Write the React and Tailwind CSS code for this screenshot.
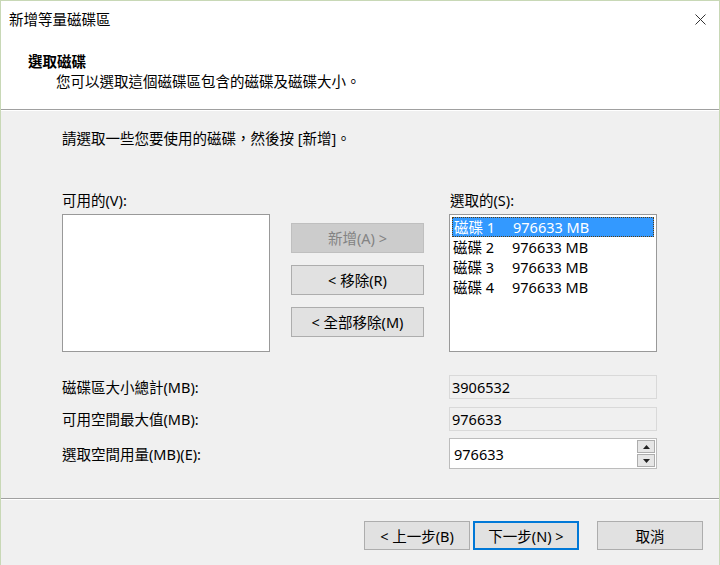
import React from "react";

// 新增等量磁碟區 精靈 — 選取磁碟 頁面

const FONT = {
  fontFamily: '"Noto Sans", "Noto Sans CJK TC", sans-serif',
};

const disks = [
  { name: "磁碟 1", size: "976633 MB", selected: true },
  { name: "磁碟 2", size: "976633 MB" },
  { name: "磁碟 3", size: "976633 MB" },
  { name: "磁碟 4", size: "976633 MB" },
];

function Btn({ children, disabled, primary, className = "" }) {
  let look = "border border-[#adadad] bg-[#e1e1e1] text-black";
  if (disabled) look = "border border-[#bfbfbf] bg-[#cccccc] text-[#838383]";
  if (primary) look = "border-2 border-[#0078d7] bg-[#e1e1e1] text-black";
  return (
    <div className={`flex items-center justify-center ${look} ${className}`}>
      {children}
    </div>
  );
}

function Arrow({ up }) {
  return (
    <svg width="7" height="4" viewBox="0 0 7 4">
      {up ? <path d="M0 4 L3.5 0 L7 4 Z" fill="#222" /> : <path d="M0 0 L3.5 4 L7 0 Z" fill="#222" />}
    </svg>
  );
}

export default function App() {
  return (
    <div
      className="flex h-[565px] w-[720px] flex-col border-x border-t border-[#c8d8b6] bg-[#f0f0f0] text-[14.5px] leading-[20px] text-black"
      style={FONT}
    >
      {/* 上方白色標題區 */}
      <header className="h-[108px] bg-white">
        <div className="flex h-[36px] items-center justify-between pl-[8px] pr-[13px]">
          <span>新增等量磁碟區</span>
          <svg width="11" height="11" viewBox="0 0 11 11">
            <path d="M0.5 0.5 L10.5 10.5 M10.5 0.5 L0.5 10.5" stroke="#333" strokeWidth="1" />
          </svg>
        </div>
        <div className="pl-[27px] pt-[14px]">
          <div className="font-bold">選取磁碟</div>
          <div className="pl-[28px]">您可以選取這個磁碟區包含的磁碟及磁碟大小。</div>
        </div>
      </header>
      <div className="h-px bg-[#a0a0a0]" />
      <div className="h-px bg-white" />

      {/* 內容 */}
      <main className="h-[387px] pl-[61px] pt-[17px]">
        <p>請選取一些您要使用的磁碟，然後按 [新增]。</p>

        <div className="mt-[42px] grid grid-cols-[229px_158px_208px]">
          <div className="h-[20px]">可用的(V):</div>
          <div />
          <div className="h-[20px] pl-[1px]">選取的(S):</div>

          <div className="mt-[4px] h-[138px] w-[208px] border border-[#999999] bg-white" />
          <div className="mt-[4px] flex w-[133px] flex-col gap-[12px] pt-[9px]">
            <Btn disabled className="h-[30px]">新增(A) &gt;</Btn>
            <Btn className="h-[30px]">&lt; 移除(R)</Btn>
            <Btn className="h-[30px]">&lt; 全部移除(M)</Btn>
          </div>
          <div className="mt-[4px] h-[138px] border border-[#999999] bg-white p-[2px]">
            {disks.map((d) => (
              <div
                key={d.name}
                className={`flex h-[20px] items-center pl-[1px] ${
                  d.selected ? "border border-dotted border-[#5a3c10] bg-[#3399ff] text-white" : ""
                }`}
              >
                <span className="w-[59px]">{d.name}</span>
                <span>{d.size}</span>
              </div>
            ))}
          </div>
        </div>

        <div className="mt-[23px] grid grid-cols-[387px_208px] items-center">
          <div>磁碟區大小總計(MB):</div>
          <div className="flex h-[24px] items-center border border-[#d9d9d9] bg-[#f0f0f0] pl-[2px]">3906532</div>

          <div className="mt-[8px]">可用空間最大值(MB):</div>
          <div className="mt-[8px] flex h-[24px] items-center border border-[#d9d9d9] bg-[#f0f0f0] pl-[2px]">976633</div>

          <div className="mt-[7px]">選取空間用量(MB)(E):</div>
          <div className="mt-[7px] flex h-[31px] items-stretch border border-[#bcbcbc] bg-white">
            <div className="flex flex-1 items-center pl-[4px]">976633</div>
            <div className="flex w-[20px] flex-col gap-px p-px">
              <div className="flex flex-1 items-center justify-center border border-[#adadad] bg-[#e6e6e6]">
                <Arrow up />
              </div>
              <div className="flex flex-1 items-center justify-center border border-[#adadad] bg-[#e6e6e6]">
                <Arrow />
              </div>
            </div>
          </div>
        </div>
      </main>

      {/* 底部按鈕 */}
      <div className="h-px bg-[#a0a0a0]" />
      <div className="h-px bg-white" />
      <footer className="flex justify-end pr-[16px] pt-[21px]">
        <div className="flex gap-[3px]">
          <Btn className="h-[29px] w-[106px]">&lt; 上一步(B)</Btn>
          <Btn primary className="h-[29px] w-[106px]">下一步(N) &gt;</Btn>
        </div>
        <Btn className="ml-[18px] h-[29px] w-[106px]">取消</Btn>
      </footer>
    </div>
  );
}
